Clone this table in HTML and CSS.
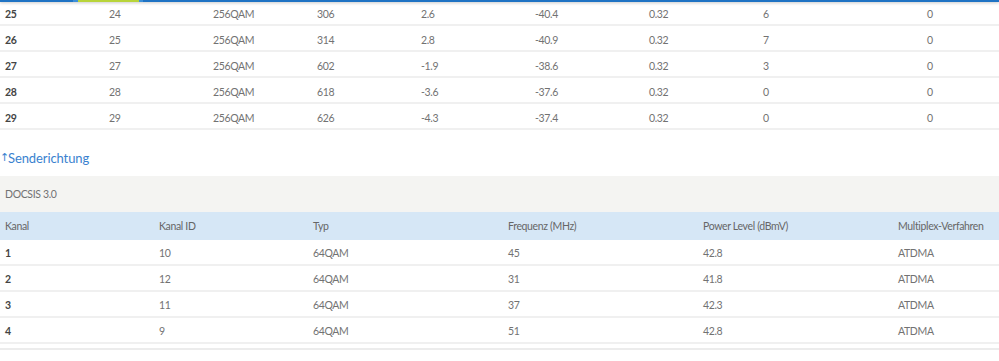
FILE: index.html
```html
<!DOCTYPE html>
<html lang="de">
<head>
<meta charset="utf-8">
<link rel="stylesheet" href="styles.css">
</head>
<body>
<div class="topbar"><span class="tab"></span></div>
<table class="tbl down">
  <colgroup>
    <col class="w104"><col class="w104"><col class="w104"><col class="w104"><col class="w114"><col class="w114"><col class="w114"><col class="w164"><col>
  </colgroup>
  <tbody>
    <tr><td class="b">25</td><td>24</td><td>256QAM</td><td>306</td><td>2.6</td><td>-40.4</td><td>0.32</td><td>6</td><td>0</td></tr>
    <tr><td class="b">26</td><td>25</td><td>256QAM</td><td>314</td><td>2.8</td><td>-40.9</td><td>0.32</td><td>7</td><td>0</td></tr>
    <tr><td class="b">27</td><td>27</td><td>256QAM</td><td>602</td><td>-1.9</td><td>-38.6</td><td>0.32</td><td>3</td><td>0</td></tr>
    <tr><td class="b">28</td><td>28</td><td>256QAM</td><td>618</td><td>-3.6</td><td>-37.6</td><td>0.32</td><td>0</td><td>0</td></tr>
    <tr><td class="b">29</td><td>29</td><td>256QAM</td><td>626</td><td>-4.3</td><td>-37.4</td><td>0.32</td><td>0</td><td>0</td></tr>
  </tbody>
</table>
<h2 class="dir"><span class="arr">↑</span><span>Senderichtung</span></h2>
<div class="group">DOCSIS 3.0</div>
<table class="tbl up">
  <colgroup>
    <col class="w154"><col class="w154"><col class="w195"><col class="w195"><col class="w195"><col>
  </colgroup>
  <thead>
    <tr><th>Kanal</th><th>Kanal ID</th><th>Typ</th><th>Frequenz (MHz)</th><th>Power Level (dBmV)</th><th>Multiplex-Verfahren</th></tr>
  </thead>
  <tbody>
    <tr><td class="b">1</td><td>10</td><td>64QAM</td><td>45</td><td>42.8</td><td>ATDMA</td></tr>
    <tr><td class="b">2</td><td>12</td><td>64QAM</td><td>31</td><td>41.8</td><td>ATDMA</td></tr>
    <tr><td class="b">3</td><td>11</td><td>64QAM</td><td>37</td><td>42.3</td><td>ATDMA</td></tr>
    <tr><td class="b">4</td><td>9</td><td>64QAM</td><td>51</td><td>42.8</td><td>ATDMA</td></tr>
  </tbody>
</table>
<div class="after"></div>
</body>
</html>
```
FILE: styles.css
```css
html, body {
  margin: 0;
  padding: 0;
  background: #fff;
}
body {
  font-family: Lato, "Open Sans", sans-serif;
  font-size: 10.5px;
  letter-spacing: -0.35px;
  color: #727272;
  width: 999px;
  overflow: hidden;
}
.topbar {
  position: absolute;
  left: 0;
  top: 0;
  width: 999px;
  height: 2px;
  background: #1f73c4;
  box-shadow: 0 1px 3px rgba(0,0,0,0.25);
}
.tab {
  position: absolute;
  left: 73px;
  top: 0;
  width: 70px;
  height: 2px;
  background: #3c8fd8;
}
.tab::after {
  content: "";
  position: absolute;
  left: 5px;
  top: 0;
  width: 61px;
  height: 2px;
  background: #b8d43a;
}
.w104 { width: 104px; }
.w114 { width: 114px; }
.w164 { width: 164px; }
.w154 { width: 154px; }
.w195 { width: 195px; }
.tbl {
  width: 999px;
  border-collapse: collapse;
  table-layout: fixed;
}
.tbl td, .tbl th {
  padding: 0 5px;
  height: 24px;
  text-align: left;
  font-weight: normal;
  white-space: nowrap;
}
.tbl td {
  border-bottom: 2px solid #f0f0f0;
}
.down td {
  padding-top: 3px;
  height: 21px;
}
.up td {
  padding-top: 2px;
  height: 22px;
}
.tbl td.b {
  font-weight: bold;
  color: #444;
}
.dir {
  display: flex;
  align-items: center;
  margin: 18px 0 0;
  height: 28px;
  padding-bottom: 8px;
  box-sizing: border-box;
  font-size: 13px;
  letter-spacing: -0.1px;
  font-weight: normal;
  color: #3a82cf;
  line-height: 20px;
}
.arr {
  width: 8px;
  flex: none;
  font-family: "DejaVu Sans", sans-serif;
  font-size: 11px;
}
.group {
  background: #f4f4f2;
  height: 36px;
  line-height: 36px;
  padding: 0 5px;
}
.up th {
  background: #d6e7f6;
  height: 28px;
  color: #666;
}
.after {
  margin-top: 4px;
  border-top: 2px solid #ececec;
}
```
